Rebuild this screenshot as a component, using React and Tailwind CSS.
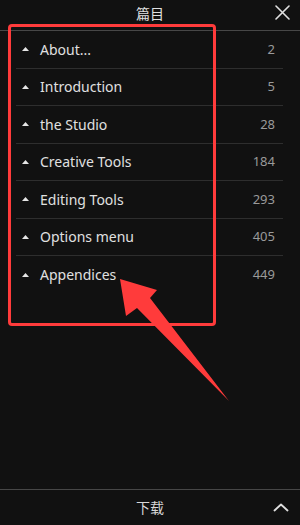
const chapters = [
  { title: "About...", page: 2 },
  { title: "Introduction", page: 5 },
  { title: "the Studio", page: 28 },
  { title: "Creative Tools", page: 184 },
  { title: "Editing Tools", page: 293 },
  { title: "Options menu", page: 405 },
  { title: "Appendices", page: 449 },
];

function Caret() {
  return (
    <svg width="7" height="4" viewBox="0 0 7 4" className="shrink-0">
      <path d="M3.5 0 L7 4 L0 4 Z" fill="#e6e6e6" />
    </svg>
  );
}

export default function App() {
  return (
    <div
      className="relative flex h-[525px] w-[300px] flex-col overflow-hidden bg-[#111111] text-[#dcdcdc]"
      style={{ fontFamily: '"Noto Sans", "Noto Sans CJK SC", sans-serif' }}
    >
      {/* header */}
      <div className="relative flex h-[31px] shrink-0 items-center justify-center border-b border-[#474747] pb-[3px]">
        <span className="text-[14px] leading-none text-[#e0e0e0]">篇目</span>
        <button className="absolute right-[10px] top-[4px] flex h-[16px] w-[16px] items-center justify-center">
          <svg width="15" height="15" viewBox="0 0 15 15">
            <path
              d="M1 1 L14 14 M14 1 L1 14"
              stroke="#e0e0e0"
              strokeWidth="1.6"
              strokeLinecap="round"
            />
          </svg>
        </button>
      </div>

      {/* chapter list */}
      <div className="flex-1">
        <ul className="ml-[16px] mr-[17px]">
          {chapters.map((c, i) => (
            <li
              key={c.title}
              className={`flex h-[37.5px] items-center ${
                i < chapters.length - 1 ? "border-b border-[#2e2e2e]" : ""
              }`}
            >
              <div className="ml-[6px] w-[18px]">
                <Caret />
              </div>
              <span className="flex-1 text-[14px] text-[#e0e0e0]">{c.title}</span>
              <span className="mr-[8px] text-[13px] text-[#9a9a9a]">{c.page}</span>
            </li>
          ))}
        </ul>
      </div>

      {/* footer */}
      <div className="relative flex h-[36px] shrink-0 items-center justify-center border-t border-[#474747]">
        <span className="text-[14px] leading-none text-[#d8d8d8]">下载</span>
        <svg
          className="absolute right-[11px] top-[13px]"
          width="16"
          height="9"
          viewBox="0 0 16 9"
        >
          <path
            d="M1.5 7.5 L8 1.5 L14.5 7.5"
            stroke="#e0e0e0"
            strokeWidth="1.8"
            fill="none"
            strokeLinecap="round"
            strokeLinejoin="round"
          />
        </svg>
      </div>

      {/* annotation overlay */}
      <div className="pointer-events-none absolute left-[8px] top-[24px] h-[302px] w-[208px] rounded-[4px] border-[3px] border-[#ff3b3b]" />
      <svg
        className="pointer-events-none absolute left-0 top-0"
        width="300"
        height="525"
        viewBox="0 0 300 525"
      >
        <polygon
          points="120,279 157,290 150,298 229,401 137,308 126,316"
          fill="#ff3b3b"
        />
      </svg>
    </div>
  );
}
